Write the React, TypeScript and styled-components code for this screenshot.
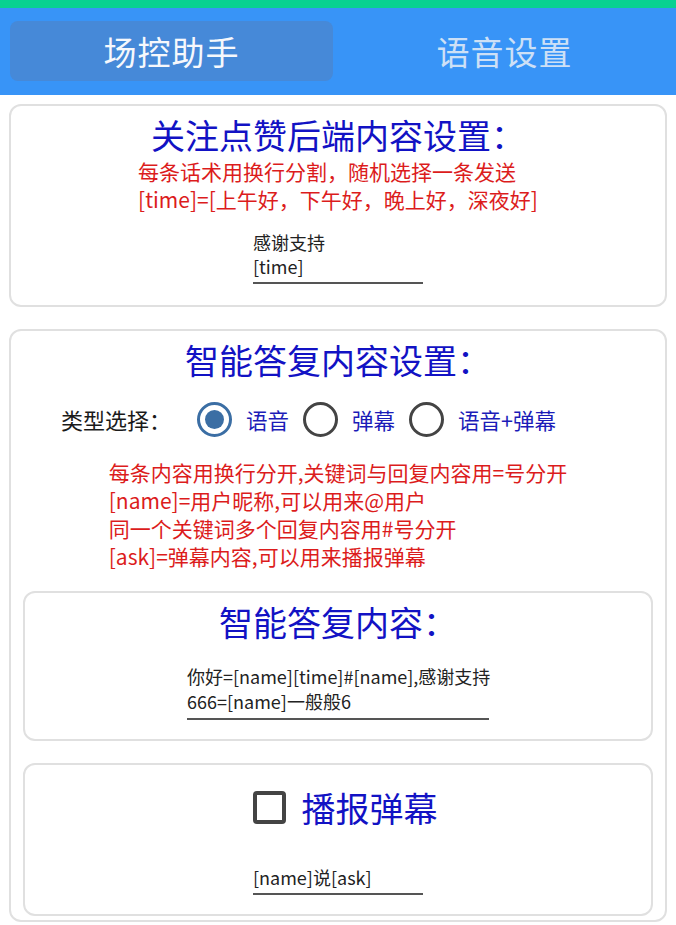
import React, { useState } from "react";
import styled, { createGlobalStyle } from "styled-components";

const GlobalStyle = createGlobalStyle`
  html, body {
    margin: 0;
    padding: 0;
    background: #ffffff;
  }
  body {
    font-family: "Noto Sans CJK SC", "Noto Sans", sans-serif;
    color: #222222;
  }
  * {
    box-sizing: border-box;
  }
`;

type ReplyType = "voice" | "danmu" | "both";

const replyOptions: { key: ReplyType; label: string }[] = [
  { key: "voice", label: "语音" },
  { key: "danmu", label: "弹幕" },
  { key: "both", label: "语音+弹幕" },
];

const App: React.FC = () => {
  const [tab, setTab] = useState(0);
  const [replyType, setReplyType] = useState<ReplyType>("voice");
  const [broadcast, setBroadcast] = useState(false);

  return (
    <Page>
      <GlobalStyle />
      <Header>
        <Tab $active={tab === 0} onClick={() => setTab(0)}>
          场控助手
        </Tab>
        <Tab $active={tab === 1} onClick={() => setTab(1)}>
          语音设置
        </Tab>
      </Header>

      <Content>
        <Card>
          <Title>关注点赞后端内容设置：</Title>
          <Hint $top={1}>
            <div>每条话术用换行分割，随机选择一条发送</div>
            <div>[time]=[上午好，下午好，晚上好，深夜好]</div>
          </Hint>
          <Field $width={170} $lineHeight={24} $top={17}>
            <div>感谢支持</div>
            <div>[time]</div>
          </Field>
          <Spacer $height={21} />
        </Card>

        <Card>
          <Title>智能答复内容设置：</Title>
          <RadioRow>
            <RadioLabel>类型选择：</RadioLabel>
            {replyOptions.map((opt) => (
              <RadioOption key={opt.key} onClick={() => setReplyType(opt.key)}>
                <RadioRing $checked={replyType === opt.key} />
                <RadioText>{opt.label}</RadioText>
              </RadioOption>
            ))}
          </RadioRow>
          <Hint $top={19}>
            <div>每条内容用换行分开,关键词与回复内容用=号分开</div>
            <div>[name]=用户昵称,可以用来@用户</div>
            <div>同一个关键词多个回复内容用#号分开</div>
            <div>[ask]=弹幕内容,可以用来播报弹幕</div>
          </Hint>

          <InnerCard $top={21}>
            <Title>智能答复内容：</Title>
            <Field $width={302} $lineHeight={25} $top={21}>
              <div>你好=[name][time]#[name],感谢支持</div>
              <div>666=[name]一般般6</div>
            </Field>
            <Spacer $height={19} />
          </InnerCard>

          <InnerCard $top={22}>
            <CheckRow onClick={() => setBroadcast(!broadcast)}>
              <CheckBox $checked={broadcast} />
              <CheckText>播报弹幕</CheckText>
            </CheckRow>
            <Field $width={170} $lineHeight={24} $top={36}>
              <div>[name]说[ask]</div>
            </Field>
            <Spacer $height={19} />
          </InnerCard>
          <Spacer $height={4} />
        </Card>
      </Content>
    </Page>
  );
};

export default App;

const Page = styled.div`
  width: 676px;
  min-height: 925px;
  background: #ffffff;
`;

const Header = styled.div`
  display: flex;
  gap: 10px;
  padding: 13px 10px 14px;
  background: #3894f7;
  border-top: 8px solid #08d191;
`;

const Tab = styled.div<{ $active: boolean }>`
  flex: 1;
  height: 60px;
  display: flex;
  align-items: center;
  justify-content: center;
  border-radius: 8px;
  font-size: 33px;
  letter-spacing: 1px;
  cursor: pointer;
  color: ${(p) => (p.$active ? "#f6f8fc" : "#cde0f6")};
  background: ${(p) => (p.$active ? "#4689d8" : "transparent")};
`;

const Content = styled.div`
  display: flex;
  flex-direction: column;
  gap: 22px;
  padding: 9px 9px 0 9px;
`;

const Card = styled.div`
  display: flex;
  flex-direction: column;
  align-items: center;
  border: 2px solid #e0e0e0;
  border-radius: 12px;
  padding: 8px 12px 0;
`;

const InnerCard = styled.div<{ $top: number }>`
  align-self: stretch;
  display: flex;
  flex-direction: column;
  align-items: center;
  border: 2px solid #e0e0e0;
  border-radius: 12px;
  padding: 8px 12px 0;
  margin-top: ${(p) => p.$top}px;
`;

const Title = styled.div`
  font-size: 34px;
  line-height: 42px;
  color: #1212c4;
  white-space: nowrap;
`;

const Hint = styled.div<{ $top?: number }>`
  font-size: 21px;
  line-height: 28px;
  color: #dc1c1c;
  white-space: nowrap;
  margin-top: ${(p) => p.$top ?? 0}px;
`;

const Field = styled.div<{ $width: number; $lineHeight: number; $top: number }>`
  width: ${(p) => p.$width}px;
  margin-top: ${(p) => p.$top}px;
  padding-bottom: 4px;
  border-bottom: 2px solid #555555;
  font-size: 18px;
  line-height: ${(p) => p.$lineHeight}px;
  color: #222222;
  white-space: nowrap;
`;

const Spacer = styled.div<{ $height: number }>`
  height: ${(p) => p.$height}px;
  flex-shrink: 0;
`;

const RadioRow = styled.div`
  align-self: stretch;
  display: flex;
  align-items: center;
  height: 40px;
  margin-top: 18px;
  padding-left: 38px;
  gap: 14px;
`;

const RadioLabel = styled.div`
  font-size: 22px;
  color: #1a1a1a;
  margin-right: 12px;
`;

const RadioOption = styled.div`
  display: flex;
  align-items: center;
  gap: 14px;
  cursor: pointer;
`;

const RadioRing = styled.div<{ $checked: boolean }>`
  position: relative;
  width: 35px;
  height: 35px;
  border-radius: 50%;
  border: 3px solid ${(p) => (p.$checked ? "#3b6ea4" : "#444444")};

  &::after {
    content: "";
    display: ${(p) => (p.$checked ? "block" : "none")};
    position: absolute;
    left: 5px;
    top: 5px;
    width: 19px;
    height: 19px;
    border-radius: 50%;
    background: #3b6ea4;
  }
`;

const RadioText = styled.div`
  font-size: 21.5px;
  color: #1c1cb8;
`;

const CheckRow = styled.div`
  display: flex;
  align-items: center;
  gap: 16px;
  height: 44px;
  margin-top: 12px;
  padding-left: 14px;
  cursor: pointer;
`;

const CheckBox = styled.div<{ $checked: boolean }>`
  width: 33px;
  height: 33px;
  border: 4px solid #444444;
  border-radius: 4px;
  background: ${(p) => (p.$checked ? "#444444" : "transparent")};
`;

const CheckText = styled.div`
  font-size: 34px;
  color: #1212c4;
`;
